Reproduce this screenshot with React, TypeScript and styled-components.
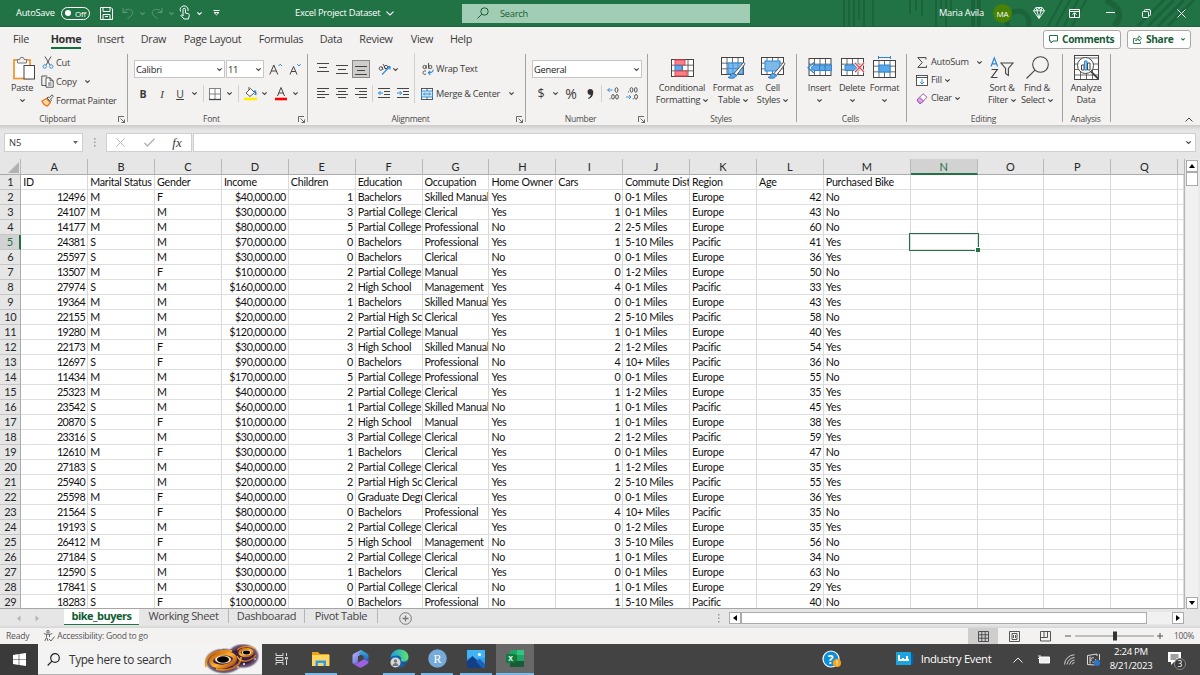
import React from 'react';
import styled, { createGlobalStyle, css } from 'styled-components';

const UI = '"Open Sans", "Noto Sans", sans-serif';
const SHEET = 'Lato, "Liberation Sans", sans-serif';
const GREEN = '#217346';
const INK = '#444';
const BLUE = '#2b88d8';

const Global = createGlobalStyle`
  * { box-sizing: border-box; }
  body { margin: 0; overflow: hidden; font-family: ${UI}; color: #3b3a39; }
  svg { display: block; flex: none; overflow: visible; }
`;

const Window = styled.div`
  width: 1200px;
  height: 675px;
  display: flex;
  flex-direction: column;
  background: #e6e6e6;
  overflow: hidden;
`;

/* Generic flow pieces for bars: a slot centres one glyph in a fixed width. */
const Slot = styled.div<{ $w: number; $gap?: number }>`
  flex: none;
  width: ${p => p.$w}px;
  margin-left: ${p => p.$gap ?? 0}px;
  display: flex;
  align-items: center;
  justify-content: center;
  white-space: nowrap;
`;

const Label = styled.span<{ $size?: number; $gap?: number; $ls?: number }>`
  font-size: ${p => p.$size ?? 9.2}px;
  margin-left: ${p => p.$gap ?? 0}px;
  letter-spacing: ${p => p.$ls ?? -0.25}px;
  line-height: 12px;
  white-space: nowrap;
`;

/* ---------- title bar ---------- */
const TitleBar = styled.header`
  position: relative;
  flex: none;
  height: 27px;
  background: ${GREEN};
  color: #fff;
  display: flex;
  align-items: center;
  border-bottom: 1px solid #1d653e;
`;
const TitlePattern = styled.svg`
  position: absolute;
  right: 0;
  top: 0;
  overflow: hidden;
`;
const TitleLeft = styled.div`
  flex: none;
  width: 462px;
  height: 26px;
  display: flex;
  align-items: center;
  padding-left: 16px;
`;
const TitleRight = styled.div`
  position: relative;
  flex: 1;
  height: 26px;
  display: flex;
  align-items: center;
  padding-left: 189px;
`;
const NameText = styled.span<{ $w: number; $gap?: number }>`
  flex: none;
  width: ${p => p.$w}px;
  margin-left: ${p => p.$gap ?? 0}px;
  font-size: 9.3px;
  letter-spacing: -0.25px;
  line-height: 14px;
  white-space: nowrap;
`;
const Toggle = styled.div`
  flex: none;
  width: 29px;
  height: 13px;
  margin-left: 5px;
  border: 1px solid #fff;
  border-radius: 7px;
  display: flex;
  align-items: center;
  padding-left: 3px;
  font-size: 8px;
  letter-spacing: -0.2px;
  gap: 4px;
`;
const Knob = styled.i`
  width: 6px;
  height: 6px;
  border-radius: 50%;
  background: #fff;
`;
const SearchBox = styled.div`
  flex: none;
  width: 288px;
  height: 19px;
  background: #a0cdb3;
  color: #185c37;
  display: flex;
  align-items: center;
  padding-left: 15px;
  gap: 11px;
  font-size: 9.3px;
  letter-spacing: -0.25px;
`;
const Avatar = styled.div`
  flex: none;
  width: 19px;
  height: 19px;
  margin-left: 7px;
  border-radius: 50%;
  background: #498205;
  display: flex;
  align-items: center;
  justify-content: center;
  font-size: 8px;
  letter-spacing: -0.2px;
`;

/* ---------- ribbon ---------- */
const Ribbon = styled.section`
  flex: none;
  height: 98px;
  background: #f3f2f1;
`;
const TabRow = styled.nav`
  height: 26px;
  display: flex;
  align-items: center;
`;
const Tab = styled.div<{ $w: number; $active?: boolean }>`
  flex: none;
  width: ${p => p.$w}px;
  height: 22px;
  display: flex;
  justify-content: center;
  font-size: 10.8px;
  letter-spacing: -0.32px;
  line-height: 19px;
  white-space: nowrap;
  ${p => p.$active && css`
    font-weight: 700;
    color: #333;
    span { height: 20px; border-bottom: 2px solid #0f703b; }
  `}
`;
const RoundButton = styled.div<{ $w: number; $gap: number }>`
  flex: none;
  width: ${p => p.$w}px;
  margin-left: ${p => p.$gap}px;
  height: 19px;
  margin-top: -2px;
  border: 1px solid #a9a8a7;
  border-radius: 3px;
  background: #fff;
  color: #185c37;
  font-weight: 700;
  font-size: 10.2px;
  letter-spacing: -0.35px;
  display: flex;
  align-items: center;
  padding-left: 5px;
  gap: 4px;
`;
const Groups = styled.div`
  height: 72px;
  display: flex;
`;
const GroupBox = styled.div<{ $w: number }>`
  flex: none;
  width: ${p => p.$w}px;
  display: flex;
  flex-direction: column;
  justify-content: space-between;
  height: 72px;
  background: linear-gradient(#a3a2a1, #a3a2a1) right 0 top 1px / 1px 68px no-repeat;
`;
const GroupBody = styled.div<{ $pad?: number }>`
  height: 54px;
  display: flex;
  padding-left: ${p => p.$pad ?? 0}px;
`;
const GroupFoot = styled.div`
  height: 14px;
  display: flex;
  align-items: center;
  padding: 2px 3px 0 0;
  margin-bottom: -1px;
  font-size: 8.5px;
  letter-spacing: -0.24px;
  line-height: 10px;
  color: #4b4a49;
  span { flex: 1; text-align: center; margin-top: -3px; }
  svg { margin: -2px 0 0 3px; }
`;
const Rows = styled.div<{ $w?: number; $top?: number }>`
  flex: none;
  display: flex;
  flex-direction: column;
  width: ${p => (p.$w ? p.$w + 'px' : 'auto')};
  padding-top: ${p => p.$top ?? 0}px;
`;
const Line = styled.div<{ $h: number }>`
  flex: none;
  height: ${p => p.$h}px;
  display: flex;
  align-items: center;
`;
const Combo = styled.div<{ $w: number; $gap?: number }>`
  flex: none;
  width: ${p => p.$w}px;
  height: 18px;
  margin-left: ${p => p.$gap ?? 0}px;
  background: #fff;
  border: 1px solid #c8c6c4;
  display: flex;
  align-items: center;
  justify-content: space-between;
  padding: 0 2px 0 1px;
  font-size: 9.3px;
  letter-spacing: -0.25px;
  color: #222;
`;
const Rule = styled.i<{ $gap: number; $h?: number }>`
  flex: none;
  width: 1px;
  height: ${p => p.$h ?? 17}px;
  margin-left: ${p => p.$gap}px;
  background: #d2d0ce;
`;
const BigButton = styled.div<{ $w: number; $gap?: number }>`
  flex: none;
  width: ${p => p.$w}px;
  margin-left: ${p => p.$gap ?? 0}px;
  display: flex;
  flex-direction: column;
  align-items: center;
  font-size: 9.2px;
  letter-spacing: -0.25px;
  line-height: 12px;
  white-space: nowrap;
  & > div { height: 29px; display: flex; align-items: center; }
  & > span { display: flex; align-items: center; gap: 3px; height: 12px; }
`;
const Pressed = styled.div`
  flex: none;
  width: 18px;
  height: 18px;
  background: #cfcdcc;
  border: 1px solid #8a8886;
  display: flex;
  align-items: center;
  justify-content: center;
`;
const Strong = styled.b`font-size: 10.5px;`;
const Ital = styled.i<{ $s?: number }>`font: italic ${p => p.$s ?? 11}px "Liberation Serif", serif;`;
const Under = styled.u`font-size: 10.5px;`;
const NumGlyph = styled.span<{ $s: number }>`font-size: ${p => p.$s}px; line-height: 14px;`;
const Collapse = styled.div`
  width: 8px;
  height: 72px;
  margin-left: 74px;
  display: flex;
  align-items: flex-end;
  padding-bottom: 3px;
`;

/* ---------- formula bar ---------- */
const FormulaBar = styled.div`
  flex: none;
  height: 34px;
  display: flex;
  align-items: flex-start;
  padding: 8px 0 0 4px;
  background: linear-gradient(#cbcac9, #e6e6e6 5px);
`;
const Field = styled.div<{ $w: number; $gap?: number }>`
  flex: none;
  width: ${p => p.$w}px;
  height: 19px;
  margin-left: ${p => p.$gap ?? 0}px;
  border: 1px solid #cfcfcf;
  background: #fff;
  display: flex;
  align-items: center;
  font-size: 9.4px;
`;
const Spread = styled(Field)`
  justify-content: space-between;
  padding: 0 4px;
`;

/* ---------- sheet ---------- */
const SheetArea = styled.main`
  flex: none;
  height: 450px;
  display: flex;
`;
const COLS = '21.3px repeat(12, 66.88px) 86.9px repeat(4, 66.9px) 1fr';
const Grid = styled.div`
  flex: none;
  width: 1185px;
  height: 450px;
  border-right: 1px solid #b5b5b5;
  border-bottom: 1px solid #a6a6a6;
  background: #fff;
  overflow: hidden;
  font-family: ${SHEET};
  color: #111;
`;
const HeadRow = styled.div`
  height: 16px;
  display: grid;
  grid-template-columns: ${COLS};
  background: #e6e6e6;
  border-bottom: 1px solid #ababab;
`;
const HeadCell = styled.div<{ $on?: boolean }>`
  height: 16px;
  border-right: 1px solid #b8b8b8;
  text-align: center;
  font-size: 11px;
  line-height: 15px;
  color: #262626;
  ${p => p.$on && css`
    background: #d2d2d2;
    color: ${GREEN};
    border-bottom: 2px solid ${GREEN};
  `}
`;
const Corner = styled.div`
  border-right: 1px solid #b8b8b8;
  display: flex;
  align-items: flex-end;
  justify-content: flex-end;
  padding: 0 1px 2px 0;
`;
const DataRow = styled.div`
  height: 15px;
  display: grid;
  grid-template-columns: ${COLS};
`;
const RowHead = styled.div<{ $on?: boolean }>`
  background: ${p => (p.$on ? '#d2d2d2' : '#e6e6e6')};
  color: ${p => (p.$on ? GREEN : '#262626')};
  border-right: ${p => (p.$on ? `2px solid ${GREEN}` : '1px solid #ababab')};
  border-bottom: 1px solid #c6c6c6;
  text-align: center;
  font-size: 11px;
  letter-spacing: -0.5px;
  line-height: 14px;
`;
const Cell = styled.div<{ $num?: boolean; $money?: boolean; $sel?: boolean }>`
  min-width: 0;
  height: 15px;
  border-right: 1px solid #dadada;
  border-bottom: 1px solid #dfdfdf;
  overflow: hidden;
  white-space: nowrap;
  font-size: 10.7px;
  letter-spacing: -0.25px;
  font-variant-ligatures: none;
  line-height: 14px;
  padding: 0 0 0 2px;
  ${p => p.$num && css`
    text-align: right;
    padding: 0 2px 0 0;
    letter-spacing: ${p.$money ? -0.38 : -0.55}px;
  `}
  ${p => p.$sel && css`
    position: relative;
    overflow: visible;
    &::before {
      content: '';
      position: absolute;
      inset: -2px -2px -2px -2px;
      border: 1.5px solid ${GREEN};
    }
    &::after {
      content: '';
      position: absolute;
      right: -3px;
      bottom: -3px;
      width: 4px;
      height: 4px;
      background: ${GREEN};
      border: solid #fff;
      border-width: 1px 0 0 1px;
    }
  `}
`;
const VScroll = styled.div`
  flex: 1;
  display: flex;
  flex-direction: column;
  align-items: center;
  padding: 1px 1px 0 0;
  background: #e9e9e9;
`;
const ScrollBtn = styled.div<{ $w?: number; $h?: number; $gap?: number }>`
  flex: none;
  width: ${p => p.$w ?? 12}px;
  height: ${p => p.$h ?? 12}px;
  margin-left: ${p => p.$gap ?? 0}px;
  border: 1px solid #ababab;
  background: #fff;
  display: flex;
  align-items: center;
  justify-content: center;
`;
const ScrollTrack = styled.div`
  flex: 1;
  width: 12px;
  background: #f1f1f1;
`;

/* ---------- sheet tabs + status ---------- */
const SheetTabs = styled.div`
  flex: none;
  height: 19px;
  display: flex;
  align-items: flex-start;
  background: linear-gradient(#e6e6e6 16px, #d4d4d4);
  font-size: 11px;
  letter-spacing: -0.35px;
  line-height: 13px;
`;
const SheetTab = styled.div<{ $w: number; $active?: boolean }>`
  flex: none;
  width: ${p => p.$w}px;
  height: 14px;
  text-align: center;
  border-right: 1px solid #b5b5b5;
  color: #444;
  white-space: nowrap;
  ${p => p.$active && css`
    height: 16px;
    background: #fff;
    color: #0f5c32;
    font-weight: 700;
    border-right: 0;
    border-bottom: 1.5px solid ${GREEN};
    letter-spacing: -0.5px;
  `}
`;
const HTrack = styled.div`
  flex: none;
  width: 431px;
  height: 12px;
  background: #f1f1f1;
  display: flex;
`;
const HScroll = styled.div`
  display: flex;
  padding-top: 3px;
`;
const StatusBar = styled.footer`
  flex: none;
  height: 16px;
  background: #f3f2f1;
  display: flex;
  align-items: center;
  color: #555;
`;
const ViewOn = styled.div`
  flex: none;
  width: 30px;
  height: 16px;
  background: #cfcecd;
  display: flex;
  align-items: center;
  justify-content: center;
`;
const StatusLeft = styled.div`
  flex: none;
  width: 968px;
  display: flex;
  align-items: center;
  padding-left: 6px;
`;

/* ---------- taskbar ---------- */
const Taskbar = styled.div`
  flex: none;
  height: 31px;
  display: flex;
  background: #434343;
  color: #fff;
`;
const Start = styled.div`
  flex: none;
  width: 38px;
  background: #3a3a3a;
  display: flex;
  align-items: center;
  justify-content: center;
`;
const TaskSearch = styled.div`
  flex: none;
  width: 224px;
  height: 31px;
  background: #f3f3f3;
  border-bottom: 1px solid #b5b5b5;
  color: #333;
  display: flex;
  align-items: center;
  padding-left: 9px;
  overflow: hidden;
`;
const SearchHint = styled.span`
  flex: none;
  width: 104px;
  margin-left: 9px;
  font-size: 11.8px;
  letter-spacing: -0.34px;
  line-height: 15px;
  white-space: nowrap;
`;
const TaskButton = styled.div<{ $w: number; $run?: boolean; $on?: boolean; $gap?: number }>`
  flex: none;
  width: ${p => p.$w}px;
  margin-left: ${p => p.$gap ?? 0}px;
  height: 31px;
  display: flex;
  align-items: center;
  justify-content: center;
  background: ${p => (p.$on ? '#686868' : 'transparent')};
  border-bottom: 2px solid ${p => (p.$run ? '#76b9ed' : 'transparent')};
`;
const Clock = styled.div`
  flex: none;
  width: 50px;
  margin-left: 6px;
  font-size: 9.6px;
  letter-spacing: -0.3px;
  line-height: 14px;
  text-align: center;
  padding-top: 1px;
`;

/* ---------- icons ---------- */
type IconProps = { w: number; h: number; children: React.ReactNode; c?: string; sw?: number };
const Icon = ({ w, h, children, c = INK, sw = 1 }: IconProps) => (
  <svg width={w} height={h} viewBox={`0 0 ${w} ${h}`} fill="none" stroke={c} strokeWidth={sw}>{children}</svg>
);
const Chev = ({ c = INK, s = 5 }: { c?: string; s?: number }) => (
  <svg width={s} height={s * 0.6} viewBox="0 0 5 3" fill="none" stroke={c} strokeWidth={5.5 / s}><path d="M.3.4 2.5 2.5 4.7.4" /></svg>
);
const Launcher = () => (
  <Icon w={7} h={7} sw={0.8}><path d="M.5 6V.5H6M2.5 2.5l4 4M6.5 3.5v3h-3" /></Icon>
);
const AlignV = ({ y }: { y: number }) => (
  <Icon w={12} h={12}><path d={`M0 ${y + 0.5}h12M2 ${y + 4.5}h8M0 ${y + 8.5}h12`} /></Icon>
);
const AlignH = ({ k }: { k: 'l' | 'c' | 'r' }) => {
  const x = k === 'l' ? 0 : k === 'c' ? 2 : 4;
  return <Icon w={12} h={12}><path d={`M0 .5h12M${x} 3.5h8M0 6.5h12M${x} 9.5h8`} /></Icon>;
};
const IndentIcon = ({ right }: { right?: boolean }) => (
  <Icon w={12} h={12}>
    <path d="M0 .5h12M6 3.5h6M6 6.5h6M0 9.5h12" />
    <path stroke={BLUE} d={right ? 'M0 5h4.5M2.7 3l2 2-2 2' : 'M.5 5H5M2.5 3l-2 2 2 2'} />
  </Icon>
);
const Brush = ({ x = 0, y = 0 }: { x?: number; y?: number }) => (
  <g transform={`translate(${x} ${y})`}>
    <path d="M16.5.5 7 11.5l2.400 2L17.500 2.600c.7-1-.2-2.300-1-2.100z" fill="#fff" stroke={INK} strokeWidth=".9" />
    <path d="M6.800 11.500c-2-.4-3.300.7-3.500 2.300-.2 1.200-1 1.400-2.300 1.500 2.500 1.700 7.600 1.500 8.400-2z" fill="#5ba7e8" stroke="#1e6fb8" strokeWidth=".9" />
  </g>
);
const PasteIcon = () => (
  <Icon w={22} h={24}>
    <rect x="1" y="4" width="16" height="18.5" fill="#fff" stroke="#f0932b" strokeWidth="1.7" />
    <path d="M4.500 7V3.500h2.300a2.200 2.200 0 0 1 4.400 0h2.300V7z" fill="#f3f2f1" stroke="#777" />
    <rect x="11" y="9.5" width="10.500" height="13.500" fill="#fff" />
  </Icon>
);
const CutIcon = () => (
  <Icon w={12} h={13} sw={0.9}>
    <path d="M3 .5l5 8.500M9 .5 4 9" />
    <circle cx="2.700" cy="10.500" r="1.700" stroke={BLUE} /><circle cx="9.300" cy="10.500" r="1.700" stroke={BLUE} />
  </Icon>
);
const CopyIcon = () => (
  <Icon w={13} h={13} sw={0.9}>
    <path d="M5 10.500H.8V1h5.500" /><path d="M5 2.800h4l3.200 3v6.400H5z" fill="#fff" /><path d="M9 2.800v3h3.200M7 8h3.500M7 10h3.500" />
  </Icon>
);
const PainterIcon = () => (
  <Icon w={13} h={13} sw={0.9}>
    <path d="M1 7l4.500-2.500 3.800 4L6.500 12C4 11.500 2 10 1 7z" fill="#ffd9a0" stroke="#e8762a" strokeWidth="1.300" />
    <path d="M6 4l1.200-1 1 .8L11 .8l1.300 1.400-2.700 2.800.8 1.200-1 1.300z" fill="#fff" />
  </Icon>
);
const GridLines = ({ w = 22, h = 17 }: { w?: number; h?: number }) => (
  <g><rect x=".5" y=".5" width={w} height={h} fill="#fff" /><path d={`M.5 ${h / 3 + 0.5}h${w}M.5 ${(h * 2) / 3 + 0.5}h${w}M${w / 4 + 0.5} .5v${h}M${w / 2 + 0.5} .5v${h}M${(w * 3) / 4 + 0.5} .5v${h}`} strokeWidth=".8" /></g>
);
const CondIcon = () => (
  <Icon w={23} h={18}>
    <GridLines />
    <rect x="4" y="1" width="10" height="5" fill="#ff7f86" stroke="#e8424c" />
    <rect x="4" y="6.500" width="7" height="5" fill="#5ba7e8" stroke={BLUE} />
    <rect x="4" y="12" width="12" height="5" fill="#ff7f86" stroke="#e8424c" />
  </Icon>
);
const TableIcon = () => (
  <Icon w={24} h={21}><GridLines /><rect x="7" y="6" width="15" height="11" fill="#7db8ea" stroke={BLUE} /><path d="M7 11.500h15M12 6v11M17 6v11" stroke={BLUE} strokeWidth=".7" /><Brush x={6} y={5} /></Icon>
);
const CellIcon = () => (
  <Icon w={24} h={21}><GridLines /><rect x="4" y="4" width="15" height="10" fill="#7db8ea" stroke={BLUE} /><Brush x={6} y={5} /></Icon>
);
const InsertIcon = () => (
  <Icon w={25} h={21}><g transform="translate(1.500 1)"><GridLines /></g><path d="M7 8h17.500v5.500H7L4 10.700z" fill="#5ba7e8" stroke={BLUE} /><path d="M7 5.500l-6 5.200 6 5.300" stroke={BLUE} strokeWidth="1.200" /><path d="M12.500 8v5.500M18 8v5.500" stroke="#2170b8" strokeWidth=".7" /></Icon>
);
const DeleteIcon = () => (
  <Icon w={23} h={21}><g transform="translate(0 1)"><GridLines /></g><path d="M4 8h9l3.500 2.800L13 13.500H4z" fill="#5ba7e8" stroke={BLUE} /><path d="M14 6l9 9M23 6l-9 9" stroke="#f3f2f1" strokeWidth="3" /><path d="M14 6l9 9M23 6l-9 9" stroke="#e8424c" strokeWidth="1.200" /></Icon>
);
const FormatIcon = () => (
  <Icon w={23} h={23}><g transform="translate(0 4)"><GridLines /></g><rect x="6" y="9" width="11" height="7" fill="#5ba7e8" stroke={BLUE} /><path d="M5.500 1.500h12M5.500 0v3M17.500 0v3" stroke={BLUE} /></Icon>
);
const SortIcon = () => (
  <Icon w={24} h={22}>
    <path d="M1 9.500 4.300 1 7.600 9.500M2.200 6.800h4.200" stroke={BLUE} strokeWidth="1.200" />
    <path d="M1.500 12.500h5.800L1.500 20.500h6" strokeWidth="1.200" />
    <path d="M11 6h12l-4.600 5.500v7l-2.800-2v-5z" strokeWidth="1.100" />
  </Icon>
);
const FindIcon = () => (<Icon w={23} h={23} sw={1.1}><circle cx="14.500" cy="8.500" r="7.800" /><path d="M9 14.200.5 22.500" /></Icon>);
const AnalyzeIcon = () => (
  <Icon w={25} h={25}>
    <rect x=".5" y=".5" width="24" height="24" fill="#fff" /><path d="M.5 3h24M.5 9h24M.5 14.500h24M.5 20h24M6.500 14v10.500M12.500 14v10.500M18.500 14v10.500" strokeWidth=".8" />
    <circle cx="11.500" cy="10.500" r="8" fill="#fff" /><path d="M17 16.500l7 7" strokeWidth="1.800" />
    <path d="M7.500 10v5h2.500v-5z" /><path d="M10.500 6v9h2.500V6z" fill="#9cc9f0" stroke={BLUE} /><path d="M13.500 8v7H16V8z" />
  </Icon>
);
const WinLogo = () => (
  <svg width="13" height="13" viewBox="0 0 13 13" fill="#fff"><path d="M0 1.900 5.700 1.100v5.100H0zM6.300 1 13 0v6.200H6.300zM0 6.800h5.700v5.100L0 11.100zM6.300 6.800H13V13l-6.700-1z" /></svg>
);
const BlackHole = () => (
  <svg width="56" height="30" viewBox="0 0 56 30">
    <defs>
      <radialGradient id="glow"><stop offset=".6" stopColor="#39204a" /><stop offset=".85" stopColor="#5c4366" stopOpacity=".8" /><stop offset="1" stopColor="#b9a9b9" stopOpacity="0" /></radialGradient>
      <linearGradient id="fire" x2="1" y2="1"><stop offset="0" stopColor="#c25a08" /><stop offset=".5" stopColor="#ffb52e" /><stop offset="1" stopColor="#b34a0a" /></linearGradient>
    </defs>
    <ellipse cx="20" cy="17" rx="20" ry="13.500" fill="url(#glow)" /><ellipse cx="39" cy="12" rx="17" ry="13" fill="url(#glow)" />
    <g fill="none" stroke="url(#fire)">
      <ellipse cx="19" cy="16" rx="12" ry="6.500" strokeWidth="4" transform="rotate(-8 19 16)" />
      <path d="M2 23C0 12 10 5 28 7M37 13c0 10-12 15-25 12" strokeWidth="2" />
      <ellipse cx="42" cy="8.500" rx="6.500" ry="3.500" strokeWidth="2.500" /><path d="M33 12c4 8 14 6 19-1M33 6c4-4 12-5 19-1" strokeWidth="1.300" />
    </g>
    <ellipse cx="19" cy="15.500" rx="8" ry="4" fill="#ffe9b0" /><ellipse cx="19" cy="15.500" rx="6" ry="3.300" fill="#000" />
    <ellipse cx="42.500" cy="8.500" rx="4.600" ry="2.500" fill="#ffe9b0" /><ellipse cx="42.500" cy="8.500" rx="3.500" ry="1.900" fill="#000" />
    <g fill="#fff"><circle cx="17" cy="4.500" r=".8" /><circle cx="40" cy="20" r="1" /><circle cx="34" cy="23" r=".8" /><circle cx="51" cy="15" r=".8" /></g>
  </svg>
);

/* ---------- data ---------- */
const HEADERS = ['ID', 'Marital Status', 'Gender', 'Income', 'Children', 'Education', 'Occupation', 'Home Owner', 'Cars', 'Commute Distance', 'Region', 'Age', 'Purchased Bike'];
const E: Record<string, string> = { B: 'Bachelors', PC: 'Partial College', HS: 'High School', PH: 'Partial High School', GD: 'Graduate Degrees' };
const O: Record<string, string> = { SM: 'Skilled Manual', C: 'Clerical', P: 'Professional', M: 'Manual', MG: 'Management' };
const R: Record<string, string> = { E: 'Europe', P: 'Pacific' };
const RAW = `12496 M F 40 1 B SM Yes 0 0-1 E 42 No
24107 M M 30 3 PC C Yes 1 0-1 E 43 No
14177 M M 80 5 PC P No 2 2-5 E 60 No
24381 S M 70 0 B P Yes 1 5-10 P 41 Yes
25597 S M 30 0 B C No 0 0-1 E 36 Yes
13507 M F 10 2 PC M Yes 0 1-2 E 50 No
27974 S M 160 2 HS MG Yes 4 0-1 P 33 Yes
19364 M M 40 1 B SM Yes 0 0-1 E 43 Yes
22155 M M 20 2 PH C Yes 2 5-10 P 58 No
19280 M M 120 2 PC M Yes 1 0-1 E 40 Yes
22173 M F 30 3 HS SM No 2 1-2 P 54 Yes
12697 S F 90 0 B P No 4 10+ P 36 No
11434 M M 170 5 PC P Yes 0 0-1 E 55 No
25323 M M 40 2 PC C Yes 1 1-2 E 35 Yes
23542 S M 60 1 PC SM No 1 0-1 P 45 Yes
20870 S F 10 2 HS M Yes 1 0-1 E 38 Yes
23316 S M 30 3 PC C No 2 1-2 P 59 Yes
12610 M F 30 1 B C Yes 0 0-1 E 47 No
27183 S M 40 2 PC C Yes 1 1-2 E 35 Yes
25940 S M 20 2 PH C Yes 2 5-10 P 55 Yes
25598 M F 40 0 GD C Yes 0 0-1 E 36 Yes
21564 S F 80 0 B P Yes 4 10+ P 35 No
19193 S M 40 2 PC C Yes 0 1-2 E 35 Yes
26412 M F 80 5 HS MG No 3 5-10 E 56 No
27184 S M 40 2 PC C No 1 0-1 E 34 No
12590 S M 30 1 B C Yes 0 0-1 E 63 No
17841 S M 30 0 PC C No 1 0-1 E 29 Yes
18283 S F 100 0 B P No 1 5-10 P 40 No`;
const ROWS = RAW.split('\n').map(l => {
  const v = l.split(' ');
  v[3] = `$${v[3]},000.00`;
  v[5] = E[v[5]];
  v[6] = O[v[6]];
  v[9] = `${v[9]} Miles`;
  v[10] = R[v[10]];
  return v;
});
const NUMERIC = [0, 3, 4, 8, 11];
const LETTERS = 'ABCDEFGHIJKLMNOPQ'.split('');
const EMPTY = [13, 14, 15, 16, 17];

const Group = ({ w, name, pad, launch, children }: { w: number; name: string; pad?: number; launch?: boolean; children: React.ReactNode }) => (
  <GroupBox $w={w}>
    <GroupBody $pad={pad}>{children}</GroupBody>
    <GroupFoot><span>{name}</span>{launch && <Launcher />}</GroupFoot>
  </GroupBox>
);

const Title = () => (
  <TitleBar>
    <TitlePattern width="362" height="26" viewBox="0 0 362 26" fill="none" stroke="#1b633b" strokeWidth="2">
      <path d="M6 0v26M11 0v26M16 0v26M21 0v20M26 0v26M35 0v26M72 0v14M78 0v10M84 0v16M98 0v26M103 0v18M108 0v26M113 0v15" />
      <path d="M135 0v26M141 0v26" strokeWidth="4" />
      <circle cx="180" cy="22" r="11" strokeWidth="5" /><path d="M224 0l-14 26M232 0l-14 26M240 0l-14 26M248 0l-14 26" />
      <path d="M268 0c16 8 16 18 8 26" strokeWidth="6" /><path d="M300 26 326 0M310 26 336 0M320 26 346 0M330 26 356 0" strokeWidth="3" />
    </TitlePattern>
    <TitleLeft>
      <NameText $w={40}>AutoSave</NameText>
      <Toggle><Knob />Off</Toggle>
      <Slot $w={14} $gap={9}><Icon w={13} h={13} c="#fff"><path d="M.5.5h10.500l1.500 1.500v10.500H.5zM3 .5v4h7v-4M3 12.500v-5h7v5M5 9.500h3" /></Icon></Slot>
      <Slot $w={14} $gap={8}><Icon w={12} h={12} c="#5d9a78"><path d="M1 1v4.500h4.500M1.300 5.200C4 1.500 9 1.500 10.500 4.500c1 2.500-1.500 5-5 7" /></Icon></Slot>
      <Slot $w={6} $gap={4}><Chev c="#5d9a78" /></Slot>
      <Slot $w={14} $gap={5}><Icon w={12} h={12} c="#5d9a78"><path d="M11 1v4.500H6.500M10.700 5.200C8 1.500 3 1.500 1.500 4.500c-1 2.500 1.500 5 5 7" /></Icon></Slot>
      <Slot $w={6} $gap={4}><Chev c="#5d9a78" /></Slot>
      <Slot $w={12} $gap={4}><Icon w={11} h={14} c="#fff"><path d="M4 10V3.500a1.200 1.200 0 0 1 2.400 0V7l3.200.8c.8.3.8 1 .6 2l-.8 3.200H5L2 9.500c.3-1 1.300-.8 2 .3" /><path d="M1.500 5.500a4 4 0 1 1 7.500-.5" /></Icon></Slot>
      <Slot $w={6} $gap={6}><Chev c="#fff" /></Slot>
      <Slot $w={8} $gap={10}><Icon w={7} h={6} c="#fff"><path d="M.5.5h6M1 2.500l2.500 2.300L6 2.500z" /></Icon></Slot>
      <NameText $w={88} $gap={75}>Excel Project Dataset</NameText>
      <Slot $w={9} $gap={2}><Chev c="#fff" s={8} /></Slot>
    </TitleLeft>
    <SearchBox>
      <Icon w={12} h={12} c="#185c37"><circle cx="7.500" cy="4.500" r="3.700" /><path d="M4.800 7.200.5 11.500" /></Icon>
      Search
    </SearchBox>
    <TitleRight>
      <NameText $w={47}>Maria Avila</NameText>
      <Avatar>MA</Avatar>
      <Slot $w={14} $gap={20}><Icon w={12} h={12} c="#fff" sw={0.9}><path d="M3 .5h6l2.500 3.300L6 11.500.5 3.800zM.5 3.800h11M3 .5l1 3.300 2 7.500 2-7.500 1-3.300M4 3.800 6 .5l2 3.300" /></Icon></Slot>
      <Slot $w={14} $gap={21}><Icon w={11} h={9} c="#fff"><path d="M.5.5h10v8H.5zM.5 2.500h10M5.500 8V4M3.500 5.700l2-2 2 2" /></Icon></Slot>
      <Slot $w={14} $gap={22}><Icon w={9} h={2} c="#fff"><path d="M0 .5h9" /></Icon></Slot>
      <Slot $w={14} $gap={22}><Icon w={9} h={9} c="#fff"><rect x=".5" y="2.500" width="6" height="6" rx="1" /><path d="M2.500 2V1.500a1 1 0 0 1 1-1h3.500a1.500 1.500 0 0 1 1.500 1.500v3.500a1 1 0 0 1-1 1H7" /></Icon></Slot>
      <Slot $w={14} $gap={21}><Icon w={9} h={9} c="#fff"><path d="M.5.5l8 8M8.500.5l-8 8" /></Icon></Slot>
    </TitleRight>
  </TitleBar>
);

const TABS: [string, number][] = [['File', 42], ['Home', 48], ['Insert', 41], ['Draw', 45], ['Page Layout', 73], ['Formulas', 64], ['Data', 36], ['Review', 54], ['View', 38], ['Help', 40]];

const RibbonView = () => (
  <Ribbon>
    <TabRow>
      {TABS.map(([t, w]) => <Tab key={t} $w={w} $active={t === 'Home'}><span>{t}</span></Tab>)}
      <RoundButton $w={78} $gap={562}>
        <Icon w={9} h={9} c={GREEN}><path d="M.5.5h8v5.500H4L2 8V6H.5z" /></Icon>Comments
      </RoundButton>
      <RoundButton $w={64} $gap={6}>
        <Icon w={9} h={9} c={GREEN} sw={0.9}><path d="M2.500 3.500h-2v5h7v-2M2.800 6c.2-2.500 1.500-3.300 3.200-3.300V.8l2.700 2.700L6 6V4.300c-1.500 0-2.400.4-3.200 1.700z" /></Icon>Share
        <Slot $w={8} $gap={2}><Chev c={GREEN} s={4} /></Slot>
      </RoundButton>
    </TabRow>
    <Groups>
      <Group w={128} name="Clipboard" pad={8} launch>
        <BigButton $w={28}><div><Slot $w={22} $gap={4}><PasteIcon /></Slot></div><span>Paste</span><span><Chev /></span></BigButton>
        <Rows>
          <Line $h={19}><Slot $w={15} $gap={4}><CutIcon /></Slot><Label $gap={1}>Cut</Label></Line>
          <Line $h={19}><Slot $w={15} $gap={4}><CopyIcon /></Slot><Label $gap={1}>Copy</Label><Slot $w={6} $gap={8}><Chev /></Slot></Line>
          <Line $h={19}><Slot $w={15} $gap={4}><PainterIcon /></Slot><Label $gap={1}>Format Painter</Label></Line>
        </Rows>
      </Group>
      <Group w={180} name="Font" pad={6} launch>
        <Rows $top={7}>
          <Line $h={18}>
            <Combo $w={91}>Calibri<Chev /></Combo>
            <Combo $w={38} $gap={1}>11<Chev /></Combo>
            <Slot $w={14} $gap={4}><Icon w={13} h={13}><path d="M.8 11.500 4.800 2l4 9.500M2.200 8h5.200" /><path d="M9.500 3l1.700-1.800L13 3" stroke={BLUE} /></Icon></Slot>
            <Slot $w={13} $gap={6}><Icon w={12} h={13}><path d="M1 11.500 4.500 3.500 8 11.500M2.200 8.500h4.600" /><path d="M8.300 1.200 10 3l1.700-1.800" stroke={BLUE} /></Icon></Slot>
          </Line>
          <Line $h={31}>
            <Slot $w={18}><Strong>B</Strong></Slot>
            <Slot $w={18} $gap={1}><Ital>I</Ital></Slot>
            <Slot $w={18}><Under>U</Under></Slot>
            <Slot $w={6} $gap={2}><Chev /></Slot>
            <Rule $gap={6} />
            <Slot $w={14} $gap={4}><Icon w={12} h={12} sw={0.9}><rect x=".5" y=".5" width="11" height="11" fill="#fff" stroke="#777" /><path d="M6 .5v11M.5 6h11" stroke="#777" /><path d="M0 11.500h12" strokeWidth="1.300" /></Icon></Slot>
            <Slot $w={6} $gap={4}><Chev /></Slot>
            <Rule $gap={6} />
            <Slot $w={14} $gap={4}><Icon w={13} h={13} sw={0.9}><path d="M2 6 6.500 1.500l4 4L6 9.500 2 6zM5 3V0M10 4c2 .5 1.500 2.500 1 4" fill="#fff" /><path d="M10.500 3.500c1.500 1 1.500 3 1 4.500" stroke={BLUE} strokeWidth="1.500" /><path d="M0 12h13" stroke="#ffef00" strokeWidth="2.600" /></Icon></Slot>
            <Slot $w={6} $gap={4}><Chev /></Slot>
            <Slot $w={14} $gap={7}><Icon w={12} h={13}><path d="M2.500 9 6 .5 9.500 9M3.700 6h4.600" /><path d="M0 12h12" stroke="#f00" strokeWidth="2.600" /></Icon></Slot>
            <Slot $w={6} $gap={4}><Chev /></Slot>
          </Line>
        </Rows>
      </Group>
      <Group w={218} name="Alignment" pad={8} launch>
        <Rows $top={7} $w={97}>
          <Line $h={18}>
            <Slot $w={14}><AlignV y={0} /></Slot>
            <Slot $w={14} $gap={5}><AlignV y={2} /></Slot>
            <Slot $w={18} $gap={3}><Pressed><AlignV y={3} /></Pressed></Slot>
            <Slot $w={14} $gap={7}><Icon w={13} h={12} sw={0.9}><circle cx="2.800" cy="5.500" r="1.700" /><path d="M4 3.800l1 3M5 1l3 5.500" /><circle cx="8" cy="4" r="1.700" /><path d="M4 11.500 12 3.500M9 3.500h3v3" stroke={BLUE} strokeWidth="1.100" /></Icon></Slot>
            <Slot $w={6} $gap={1}><Chev /></Slot>
          </Line>
          <Line $h={31}>
            <Slot $w={14}><AlignH k="l" /></Slot>
            <Slot $w={14} $gap={5}><AlignH k="c" /></Slot>
            <Slot $w={14} $gap={5}><AlignH k="r" /></Slot>
            <Rule $gap={4} />
            <Slot $w={14} $gap={4}><IndentIcon /></Slot>
            <Slot $w={14} $gap={5}><IndentIcon right /></Slot>
          </Line>
        </Rows>
        <Rule $gap={1} $h={50} />
        <Rows $top={7}>
          <Line $h={18}>
            <Slot $w={14} $gap={6}><Icon w={12} h={12} sw={0.9}><circle cx="2.500" cy="4" r="1.600" /><path d="M4.200 2.200v3.500M6.500 0v5.700" /><circle cx="8.300" cy="4" r="1.600" /><path d="M4 8.200c-1.500-1-3 0-3 1.400s1.500 2.400 3 1.400" /><path d="M11 6.500c.5 2-1 3.300-4.500 3.300M8.300 7.800l-2 2 2 2" stroke={BLUE} strokeWidth="1.100" /></Icon></Slot>
            <Label $gap={1}>Wrap Text</Label>
          </Line>
          <Line $h={31}>
            <Slot $w={14} $gap={5}><Icon w={12} h={12} sw={0.9}><rect x=".5" y=".5" width="11" height="11" fill="#fff" /><path d="M6 .5v11" /><rect x=".5" y="3" width="11" height="6" fill="#cfe6fa" stroke={BLUE} /><path d="M2.500 6h7M4 4.500 2.500 6 4 7.500M8 4.500 9.500 6 8 7.500" stroke={BLUE} /></Icon></Slot>
            <Label $gap={2}>Merge &amp; Center</Label>
            <Slot $w={6} $gap={8}><Chev /></Slot>
          </Line>
        </Rows>
      </Group>
      <Group w={122} name="Number" pad={6} launch>
        <Rows $top={7}>
          <Line $h={18}><Combo $w={110}>General<Chev /></Combo></Line>
          <Line $h={31}>
            <Slot $w={12} $gap={3}><NumGlyph $s={12.5}>$</NumGlyph></Slot>
            <Slot $w={6} $gap={5}><Chev /></Slot>
            <Slot $w={14} $gap={6}><NumGlyph $s={14}>%</NumGlyph></Slot>
            <Slot $w={10} $gap={7}><svg width="7" height="10" viewBox="0 0 7 10" fill="#333"><path d="M3.200 0a2.900 2.900 0 1 0 .5 5.800C3.500 7.500 2.500 8.500 1 9.200l.5.700C4.500 9 6.300 6.500 6.300 3.300 6.300 1.200 5 0 3.200 0z" /></svg></Slot>
            <Rule $gap={6} />
            <Slot $w={14} $gap={4}><Icon w={12} h={13} sw={0.9}><path d="M.5 3h5M2.700 1l-2 2 2 2" stroke={BLUE} /><ellipse cx="9.500" cy="3" rx="1.500" ry="2.300" /><ellipse cx="6" cy="9.800" rx="1.400" ry="2.300" /><ellipse cx="10" cy="9.800" rx="1.400" ry="2.300" /><path d="M2.500 11.800h1" /></Icon></Slot>
            <Slot $w={14} $gap={5}><Icon w={12} h={13} sw={0.9}><ellipse cx="5.500" cy="2.900" rx="1.400" ry="2.300" /><ellipse cx="9.800" cy="2.900" rx="1.400" ry="2.300" /><path d="M2 4.900h1" /><path d="M0 10h5M3 8l2 2-2 2" stroke={BLUE} /><ellipse cx="10" cy="9.800" rx="1.500" ry="2.300" /><path d="M6.800 11.800h1" /></Icon></Slot>
          </Line>
        </Rows>
      </Group>
      <Group w={149} name="Styles" pad={5}>
        <BigButton $w={58}><div><CondIcon /></div><span>Conditional</span><span>Formatting <Chev /></span></BigButton>
        <BigButton $w={44}><div><TableIcon /></div><span>Format as</span><span>Table <Chev /></span></BigButton>
        <BigButton $w={35}><div><CellIcon /></div><span>Cell</span><span>Styles <Chev /></span></BigButton>
      </Group>
      <Group w={110} name="Cells" pad={6}>
        <BigButton $w={33}><div><InsertIcon /></div><span>Insert</span><span><Chev /></span></BigButton>
        <BigButton $w={32}><div><DeleteIcon /></div><span>Delete</span><span><Chev /></span></BigButton>
        <BigButton $w={33}><div><FormatIcon /></div><span>Format</span><span><Chev /></span></BigButton>
      </Group>
      <Group w={156} name="Editing" pad={7}>
        <Rows $w={71}>
          <Line $h={18}><Slot $w={15}><Icon w={10} h={11}><path d="M9 2.500V.6H.8L5.300 5.500.8 10.400H9.500V8.500" /></Icon></Slot><Label $gap={2}>AutoSum</Label><Slot $w={6} $gap={8}><Chev /></Slot></Line>
          <Line $h={18}><Slot $w={15}><Icon w={12} h={11} sw={0.9}><rect x=".5" y=".5" width="11" height="10" fill="#fff" /><path d="M.5 2.500h11" /><path d="M6 4v5M4 7l2 2 2-2" stroke={BLUE} /></Icon></Slot><Label $gap={2}>Fill</Label><Slot $w={6} $gap={3}><Chev /></Slot></Line>
          <Line $h={18}><Slot $w={15}><Icon w={12} h={11} sw={0.9} c="#9b4cb0"><path d="M1 7 7 .7l4 3.500-6 6.100H3.500z" fill="#fff" /><path d="M1 7l2.500-2.700 4 3.500L5 10.300H3.500z" fill="#d9a5e3" /></Icon></Slot><Label $gap={2}>Clear</Label><Slot $w={6} $gap={3}><Chev /></Slot></Line>
        </Rows>
        <BigButton $w={34}><div><SortIcon /></div><span>Sort &amp;</span><span>Filter <Chev /></span></BigButton>
        <BigButton $w={36}><div><FindIcon /></div><span>Find &amp;</span><span>Select <Chev /></span></BigButton>
      </Group>
      <Group w={48} name="Analysis">
        <BigButton $w={46}><div><AnalyzeIcon /></div><span>Analyze</span><span>Data</span></BigButton>
      </Group>
      <Collapse><svg width="8" height="5" viewBox="0 0 8 5" fill="none" stroke={INK}><path d="M.5 4.500 4 1l3.500 3.500" /></svg></Collapse>
    </Groups>
  </Ribbon>
);

const Formula = () => (
  <FormulaBar>
    <Spread $w={79}>N5<svg width="5" height="3" viewBox="0 0 5 3" fill="#666"><path d="M0 0h5L2.500 3z" /></svg></Spread>
    <Slot $w={8} $gap={8}><svg width="2" height="18" viewBox="0 0 2 18" fill="#999"><path d="M0 5h1.500v1.500H0zM0 8.500h1.500V10H0zM0 12h1.500v1.500H0z" /></svg></Slot>
    <Field $w={86} $gap={7}>
      <Slot $w={10} $gap={8}><Icon w={9} h={9} c="#b5b5b5"><path d="M.5.5l8 8M8.500.5l-8 8" /></Icon></Slot>
      <Slot $w={12} $gap={18}><Icon w={11} h={9} c="#b5b5b5" sw={1.5}><path d="M.5 5 3.500 8 10.500.7" /></Icon></Slot>
      <Slot $w={14} $gap={15}><Ital $s={13}>fx</Ital></Slot>
    </Field>
    <Spread $w={1003} $gap={1}><span /><Chev /></Spread>
  </FormulaBar>
);

const Sheet = () => (
  <SheetArea>
    <Grid>
      <HeadRow>
        <Corner><svg width="11" height="11" viewBox="0 0 11 11" fill="#b2b2b2"><path d="M11 0v11H0z" /></svg></Corner>
        {LETTERS.map(l => <HeadCell key={l} $on={l === 'N'}>{l}</HeadCell>)}
      </HeadRow>
      <DataRow>
        <RowHead>1</RowHead>
        {HEADERS.map(h => <Cell key={h}>{h}</Cell>)}
        {EMPTY.map(i => <Cell key={i} />)}
      </DataRow>
      {ROWS.map((r, n) => (
        <DataRow key={n}>
          <RowHead $on={n === 3}>{n + 2}</RowHead>
          {r.map((v, i) => <Cell key={i} $num={NUMERIC.includes(i)} $money={i === 3}>{v}</Cell>)}
          {EMPTY.map(i => <Cell key={i} $sel={n === 3 && i === 13} />)}
        </DataRow>
      ))}
    </Grid>
    <VScroll>
      <ScrollBtn><svg width="6" height="4" viewBox="0 0 6 4"><path d="M3 0l3 4H0z" /></svg></ScrollBtn>
      <ScrollBtn $h={14} />
      <ScrollTrack />
      <ScrollBtn><svg width="6" height="4" viewBox="0 0 6 4"><path d="M3 4l3-4H0z" /></svg></ScrollBtn>
    </VScroll>
  </SheetArea>
);

const Tabs = () => (
  <SheetTabs>
    <Slot $w={64}><svg width="64" height="18" viewBox="0 0 64 18" fill="#b5b5b5"><path d="M20.500 6.500v6l-3.500-3zM35.500 6.500v6l3.500-3z" /></svg></Slot>
    <SheetTab $w={75} $active>bike_buyers</SheetTab>
    <SheetTab $w={90}>Working Sheet</SheetTab>
    <SheetTab $w={76}>Dashboarad</SheetTab>
    <SheetTab $w={73}>Pivot Table</SheetTab>
    <Slot $w={14} $gap={20}><svg width="13" height="18" viewBox="0 0 13 18" fill="none" stroke="#777"><circle cx="6.500" cy="9.500" r="5.800" /><path d="M6.500 6.500v6M3.500 9.500h6" strokeWidth="1.300" /></svg></Slot>
    <Slot $w={4} $gap={305}><svg width="2" height="18" viewBox="0 0 2 18" fill="#999"><path d="M0 5h1.500v1.500H0zM0 8.500h1.500V10H0zM0 12h1.500v1.500H0z" /></svg></Slot>
    <HScroll>
      <ScrollBtn $gap={8}><svg width="4" height="6" viewBox="0 0 4 6"><path d="M4 0v6L0 3z" /></svg></ScrollBtn>
      <HTrack><ScrollBtn $w={406} /></HTrack>
      <ScrollBtn><svg width="4" height="6" viewBox="0 0 4 6"><path d="M0 0v6l4-3z" /></svg></ScrollBtn>
    </HScroll>
  </SheetTabs>
);

const Status = () => (
  <StatusBar>
    <StatusLeft>
      <Label $size={8.6} $ls={-0.25}>Ready</Label>
      <Slot $w={12} $gap={14}><Icon w={12} h={12} sw={0.9} c="#555"><circle cx="5" cy="1.800" r="1.300" /><path d="M.8 3.500C3 4.700 7 4.700 9.200 3.500M3.500 4.500v3L1.800 11M6.500 4.500V7M4 8l1 3M6 9l2 2 3.500-4.500" /></Icon></Slot>
      <Label $size={8.6} $ls={-0.25} $gap={2}>Accessibility: Good to go</Label>
    </StatusLeft>
    <ViewOn><Icon w={11} h={11} sw={0.9}><path d="M.5.5h10v10H.5zM.5 3.800h10M.5 7.200h10M3.800.5v10M7.200.5v10" /></Icon></ViewOn>
    <Slot $w={12} $gap={10}><Icon w={11} h={11} sw={0.9}><path d="M.5.5h10v10H.5zM3 2.500h5v6H3zM4.500 4v3M6.500 4v3" /></Icon></Slot>
    <Slot $w={12} $gap={19}><Icon w={11} h={11} sw={0.9}><path d="M.5.5h10v9.500H.5zM.5 6.500h7v-6M4 .5v6" /></Icon></Slot>
    <Slot $w={8} $gap={13}><Icon w={6} h={2} sw={0.9}><path d="M0 1h6" /></Icon></Slot>
    <Slot $w={79} $gap={3}><svg width="79" height="10" viewBox="0 0 79 10"><path d="M0 5h79" stroke="#8a8a8a" /><path d="M38 .5h4v9h-4z" fill="#333" /></svg></Slot>
    <Slot $w={8} $gap={2}><Icon w={6} h={6} sw={0.9}><path d="M0 3h6M3 0v6" /></Icon></Slot>
    <Label $size={8.3} $ls={-0.25} $gap={10}>100%</Label>
  </StatusBar>
);

const Task = () => (
  <Taskbar>
    <Start><WinLogo /></Start>
    <TaskSearch>
      <Icon w={13} h={13} c="#222" sw={1.2}><circle cx="8" cy="5" r="4.300" /><path d="M5 8.200.7 12.500" /></Icon>
      <SearchHint>Type here to search</SearchHint>
      <Slot $w={56} $gap={31}><BlackHole /></Slot>
    </TaskSearch>
    <TaskButton $w={38}><Icon w={13} h={12} c="#ddd"><path d="M1 0v2.500h7V0M1 12V9.500h7V12M1 4.500h7v3H1zM11.500 0v3M11.500 7v5M10.500 4.500h2v1.500h-2z" /></Icon></TaskButton>
    <TaskButton $w={32} $gap={5} $run><svg width="18" height="16" viewBox="0 0 18 16"><path d="M0 1h6l2 2h9v12H0z" fill="#e8a317" /><path d="M0 4h17.500v11H0z" fill="#ffd75e" /><path d="M3.500 15V9.500h10.500V15h-2.500v-3H6v3z" fill="#2f9be8" /></svg></TaskButton>
    <TaskButton $w={38} $gap={4}>
      <svg width="17" height="18" viewBox="0 0 17 18"><defs><linearGradient id="m1" x2="1" y2="1"><stop stopColor="#c9bcfa" /><stop offset="1" stopColor="#3a5fd0" /></linearGradient><linearGradient id="m2" x2="0" y2="1"><stop stopColor="#35b7e8" /><stop offset="1" stopColor="#2a4fb5" /></linearGradient></defs>
        <path d="M9 0 2 3.500C.5 4.500.5 5.500.5 7v5c0 2 1.500 2.500 3 1.500L6 12V6.500L12 3z" fill="url(#m1)" /><path d="M9 0l6 3.500c1.500 1 1.500 2 1.500 3.500v5L11.500 9V6L7 4z" fill="url(#m2)" /><path d="M.5 12c0 1 .5 1.500 1.500 2.200L7 17.300c1 .6 2 .6 3 0l5-3c1.500-1 1.500-2 1.500-2.800L11.500 9 6 12.500c-2 1.500-4 1-5.500-.5z" fill="#9a62e0" /><path d="M6 6.500 9 5l2.500 1.500v3L8.500 11 6 12z" fill="#434343" /></svg>
    </TaskButton>
    <TaskButton $w={32} $gap={4} $run>
      <svg width="19" height="19" viewBox="0 0 19 19"><defs><linearGradient id="eg" x2="1"><stop stopColor="#1b9de0" /><stop offset="1" stopColor="#5ee36a" /></linearGradient></defs>
        <circle cx="9.500" cy="9.500" r="9" fill="#1260b0" /><path d="M.5 8.500C1.500 3 5.500.5 9.800.5 15 .5 18.500 4 18.500 8c0 3-2.500 4.500-5 4.500-2 0-3-.8-2.500-1.800C12 8 9 6 6 6.500c-2 .3-4.500 1-5.500 2z" fill="url(#eg)" /><path d="M11.500 12.800c2 1.700 4.500 1.700 6.500.7l1.500 2h-6z" fill="#434343" /><circle cx="5.500" cy="13.500" r="5" fill="#d8d8d8" /><circle cx="5.500" cy="12" r="1.700" fill="#777" /><path d="M2.500 17c.3-4 5.700-4 6 0z" fill="#777" /></svg>
    </TaskButton>
    <TaskButton $w={32} $gap={6} $run><svg width="19" height="19" viewBox="0 0 19 19"><circle cx="9.500" cy="9.500" r="9.300" fill="#75aadb" /><text x="9.500" y="13.500" textAnchor="middle" fontFamily="Liberation Serif, serif" fontSize="12" fill="#fff">R</text></svg></TaskButton>
    <TaskButton $w={32} $gap={7} $run><svg width="18" height="18" viewBox="0 0 18 18"><path d="M0 0h18v18H0z" fill="#2e9df0" /><path d="M0 0h18v8H0z" fill="#41b4f5" /><path d="M0 11 5.500 6 17.500 18H0z" fill="#123f85" /><path d="M9 11.500 12.500 9 18 14v4h-3z" fill="#1c63b8" /><circle cx="12.500" cy="4.500" r="1.600" fill="#fff" /></svg></TaskButton>
    <TaskButton $w={38} $gap={4} $run $on>
      <svg width="18" height="17" viewBox="0 0 18 17"><path d="M4 0h7v6H4z" fill="#21a366" /><path d="M11 0h7v5h-7z" fill="#33c481" /><path d="M4 5h7v6H4z" fill="#107c41" /><path d="M11 5h7v6h-7z" fill="#21a366" /><path d="M4 11h14v6H4z" fill="#185c37" /><rect y="4" width="9" height="9" rx=".8" fill="#107c41" /><text x="4.500" y="11" textAnchor="middle" fontFamily="Open Sans, sans-serif" fontWeight="700" fontSize="7" fill="#fff">X</text></svg>
    </TaskButton>
    <TaskButton $w={22} $gap={287}>
      <svg width="20" height="18" viewBox="0 0 20 18"><circle cx="9" cy="9" r="8" fill="#0f8fd8" stroke="#fff" strokeWidth="1.200" /><text x="8.500" y="13.500" textAnchor="middle" fontFamily="Open Sans, sans-serif" fontWeight="700" fontSize="12" fill="#fff">?</text><circle cx="15" cy="13" r="4" fill="#f9a51a" /><path d="M15 10.500v3M15 14.500v1" stroke="#fff" /></svg>
    </TaskButton>
    <TaskButton $w={20} $gap={52}>
      <svg width="18" height="13" viewBox="0 0 18 13"><path d="M15 2h2.500v9L15 13z" fill="#0b5fa5" /><path d="M0 0h15v13H0z" fill="#1ba5df" /><path d="M3 3v4M7 6v1M11 4v3" stroke="#fff" strokeWidth="2" /><path d="M2 7h11v2H2z" fill="#fff" /></svg>
    </TaskButton>
    <TaskButton $w={76} $gap={3}><Label $size={11.3} $ls={-0.36}>Industry Event</Label></TaskButton>
    <Slot $w={12} $gap={18}><Icon w={10} h={6} c="#eee"><path d="M.5 5.500 5 1l4.500 4.500" /></Icon></Slot>
    <Slot $w={14} $gap={13}><svg width="13" height="9" viewBox="0 0 13 9"><path d="M1.500 2h10v6h-10z" fill="#eee" stroke="#fff" /><path d="M0 1h3M0 3.500h2" stroke="#eee" /></svg></Slot>
    <Slot $w={14} $gap={11}><Icon w={11} h={11} c="#ddd" sw={0.9}><path d="M.5 10.500A10 10 0 0 1 10.500.8M3 10.500a8 8 0 0 1 7.500-7M5.500 10.500a5.500 5.500 0 0 1 5-4.500M8 10.500a3 3 0 0 1 2.500-2" /></Icon></Slot>
    <Slot $w={14} $gap={10}><Icon w={13} h={13} c="#ddd"><path d="M.5 2.500 10 1v2M.5 2.500v9l7 .5M3 3.500v7M12.500 1v6M4.500 8c-1.500-2 0-4 2.500-3M8.500 6c1 2-1 4-3 3" /><circle cx="10" cy="10" r="3" fill="#2a77cf" stroke="none" /></Icon></Slot>
    <Clock>2:24 PM<br />8/21/2023</Clock>
    <Slot $w={20} $gap={11}>
      <svg width="19" height="20" viewBox="0 0 19 20"><path d="M0 2h13v10H6l-3 3v-3H0z" fill="#fff" /><path d="M2.500 5h8M2.500 7h8M2.500 9h6" stroke="#434343" /><circle cx="12" cy="14" r="5.500" fill="#3a3a3a" stroke="#888" /><text x="12" y="17" textAnchor="middle" fontFamily="Open Sans, sans-serif" fontSize="8.500" fill="#fff">3</text></svg>
    </Slot>
  </Taskbar>
);

export default function App() {
  return (
    <>
      <Global />
      <Window>
        <Title />
        <RibbonView />
        <Formula />
        <Sheet />
        <Tabs />
        <Status />
        <Task />
      </Window>
    </>
  );
}
